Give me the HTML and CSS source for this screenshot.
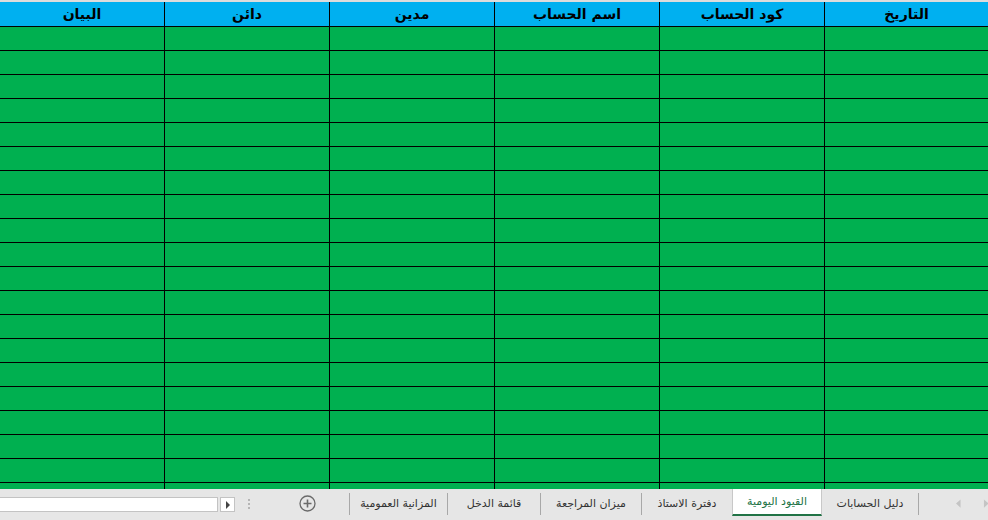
FILE: index.html
```html
<!DOCTYPE html>
<html lang="ar">
<head>
<meta charset="utf-8">
<title>القيود اليومية</title>
<link rel="stylesheet" href="styles.css">
</head>
<body>
<div class="topstrip"></div>
<div class="sheet" dir="rtl">
  <div class="row head">
    <div class="cell">التاريخ</div>
    <div class="cell">كود الحساب</div>
    <div class="cell">اسم الحساب</div>
    <div class="cell">مدين</div>
    <div class="cell">دائن</div>
    <div class="cell">البيان</div>
  </div>
  <div class="row"><div class="cell"></div><div class="cell"></div><div class="cell"></div><div class="cell"></div><div class="cell"></div><div class="cell"></div></div>
  <div class="row"><div class="cell"></div><div class="cell"></div><div class="cell"></div><div class="cell"></div><div class="cell"></div><div class="cell"></div></div>
  <div class="row"><div class="cell"></div><div class="cell"></div><div class="cell"></div><div class="cell"></div><div class="cell"></div><div class="cell"></div></div>
  <div class="row"><div class="cell"></div><div class="cell"></div><div class="cell"></div><div class="cell"></div><div class="cell"></div><div class="cell"></div></div>
  <div class="row"><div class="cell"></div><div class="cell"></div><div class="cell"></div><div class="cell"></div><div class="cell"></div><div class="cell"></div></div>
  <div class="row"><div class="cell"></div><div class="cell"></div><div class="cell"></div><div class="cell"></div><div class="cell"></div><div class="cell"></div></div>
  <div class="row"><div class="cell"></div><div class="cell"></div><div class="cell"></div><div class="cell"></div><div class="cell"></div><div class="cell"></div></div>
  <div class="row"><div class="cell"></div><div class="cell"></div><div class="cell"></div><div class="cell"></div><div class="cell"></div><div class="cell"></div></div>
  <div class="row"><div class="cell"></div><div class="cell"></div><div class="cell"></div><div class="cell"></div><div class="cell"></div><div class="cell"></div></div>
  <div class="row"><div class="cell"></div><div class="cell"></div><div class="cell"></div><div class="cell"></div><div class="cell"></div><div class="cell"></div></div>
  <div class="row"><div class="cell"></div><div class="cell"></div><div class="cell"></div><div class="cell"></div><div class="cell"></div><div class="cell"></div></div>
  <div class="row"><div class="cell"></div><div class="cell"></div><div class="cell"></div><div class="cell"></div><div class="cell"></div><div class="cell"></div></div>
  <div class="row"><div class="cell"></div><div class="cell"></div><div class="cell"></div><div class="cell"></div><div class="cell"></div><div class="cell"></div></div>
  <div class="row"><div class="cell"></div><div class="cell"></div><div class="cell"></div><div class="cell"></div><div class="cell"></div><div class="cell"></div></div>
  <div class="row"><div class="cell"></div><div class="cell"></div><div class="cell"></div><div class="cell"></div><div class="cell"></div><div class="cell"></div></div>
  <div class="row"><div class="cell"></div><div class="cell"></div><div class="cell"></div><div class="cell"></div><div class="cell"></div><div class="cell"></div></div>
  <div class="row"><div class="cell"></div><div class="cell"></div><div class="cell"></div><div class="cell"></div><div class="cell"></div><div class="cell"></div></div>
  <div class="row"><div class="cell"></div><div class="cell"></div><div class="cell"></div><div class="cell"></div><div class="cell"></div><div class="cell"></div></div>
  <div class="row"><div class="cell"></div><div class="cell"></div><div class="cell"></div><div class="cell"></div><div class="cell"></div><div class="cell"></div></div>
  <div class="row partial"><div class="cell"></div><div class="cell"></div><div class="cell"></div><div class="cell"></div><div class="cell"></div><div class="cell"></div></div>
</div>
<div class="bar">
  <div class="hscroll"></div>
  <div class="hbtn"><svg width="6" height="8" viewBox="0 0 6 8"><path d="M1 0 L5 4 L1 8 Z" fill="#444"/></svg></div>
  <div class="dots"><span></span><span></span><span></span></div>
  <div class="add"><svg width="17" height="17" viewBox="0 0 17 17"><circle cx="8.5" cy="8.5" r="7.5" fill="none" stroke="#6a6a6a" stroke-width="1.3"/><path d="M8.5 4.5 V12.5 M4.5 8.5 H12.5" stroke="#6a6a6a" stroke-width="1.6"/></svg></div>
  <div class="tabs" dir="rtl">
    <div class="tab t1">دليل الحسابات</div>
    <div class="tab t2 active">القيود اليومية</div>
    <div class="tab t3">دفترة الاستاذ</div>
    <div class="tab t4">ميزان المراجعة</div>
    <div class="tab t5">قائمة الدخل</div>
    <div class="tab t6">المزانية العمومية</div>
  </div>
  <div class="nav">
    <svg width="6" height="9" viewBox="0 0 6 9"><path d="M5 0 L0 4.5 L5 9 Z" fill="#c4c4c4"/></svg>
    <svg width="6" height="9" viewBox="0 0 6 9"><path d="M1 0 L6 4.5 L1 9 Z" fill="#c4c4c4"/></svg>
  </div>
</div>
</body>
</html>
```

FILE: styles.css
```css
html, body {
  margin: 0;
  padding: 0;
}
body {
  width: 988px;
  height: 520px;
  overflow: hidden;
  background: #ffffff;
  font-family: "DejaVu Sans", "Liberation Sans", sans-serif;
}
.topstrip {
  height: 2px;
  background: #dcdcdc;
}
.sheet {
  display: flex;
  flex-direction: column;
}
.row {
  display: grid;
  grid-template-columns: 164px repeat(4, 165px) 1fr;
  height: 24px;
  background: #00b050;
}
.cell {
  box-sizing: border-box;
  border-left: 1px solid #000;
  border-bottom: 1px solid #000;
  height: 24px;
}
.cell:last-child {
  border-left: none;
}
.row.head {
  height: 25px;
  background: #00b0f0;
}
.row.head .cell {
  height: 25px;
  text-align: center;
  font-weight: bold;
  font-size: 14px;
  line-height: 24px;
  color: #000;
}
.row.partial {
  height: 6px;
}
.row.partial .cell {
  height: 6px;
  border-bottom: none;
}
.bar {
  display: flex;
  align-items: flex-start;
  height: 31px;
  background: #e6e6e6;
  font-size: 11px;
  color: #333;
}
.hscroll {
  box-sizing: border-box;
  width: 218px;
  height: 15px;
  margin-top: 8px;
  background: #fff;
  border: 1px solid #c3c3c3;
  border-left: none;
}
.hbtn {
  box-sizing: border-box;
  width: 15px;
  height: 15px;
  margin-top: 8px;
  margin-left: 2px;
  background: #fff;
  border: 1px solid #c3c3c3;
  display: flex;
  align-items: center;
  justify-content: center;
}
.dots {
  display: flex;
  flex-direction: column;
  gap: 2px;
  margin-top: 10px;
  margin-left: 13px;
}
.dots span {
  width: 2px;
  height: 2px;
  background: #b5b5b5;
}
.add {
  margin-top: 6px;
  margin-left: 49px;
  height: 17px;
}
.tabs {
  display: flex;
  margin-left: auto;
  height: 28px;
}
.tab {
  box-sizing: border-box;
  height: 22px;
  margin-top: 4px;
  line-height: 21px;
  text-align: center;
  white-space: nowrap;
  color: #333;
}
.t1 { width: 97px; border-right: 1px solid #a8a8a8; }
.t2 { width: 90px; }
.t3 { width: 90px; }
.t4 { width: 101px; border-right: 1px solid #a8a8a8; }
.t5 { width: 93px; border-right: 1px solid #a8a8a8; }
.t6 { width: 99px; border-right: 1px solid #a8a8a8; border-left: 1px solid #a8a8a8; }
.tab.active {
  margin-top: 0;
  height: 27px;
  line-height: 26px;
  background: #fff;
  color: #217346;
  border-left: 1px solid #c8c8c8;
  border-right: 1px solid #c8c8c8;
  border-bottom: 2px solid #217346;
}
.nav {
  width: 69px;
  display: flex;
  align-items: center;
  height: 28px;
  padding-left: 37px;
  box-sizing: border-box;
  gap: 21px;
}
```
